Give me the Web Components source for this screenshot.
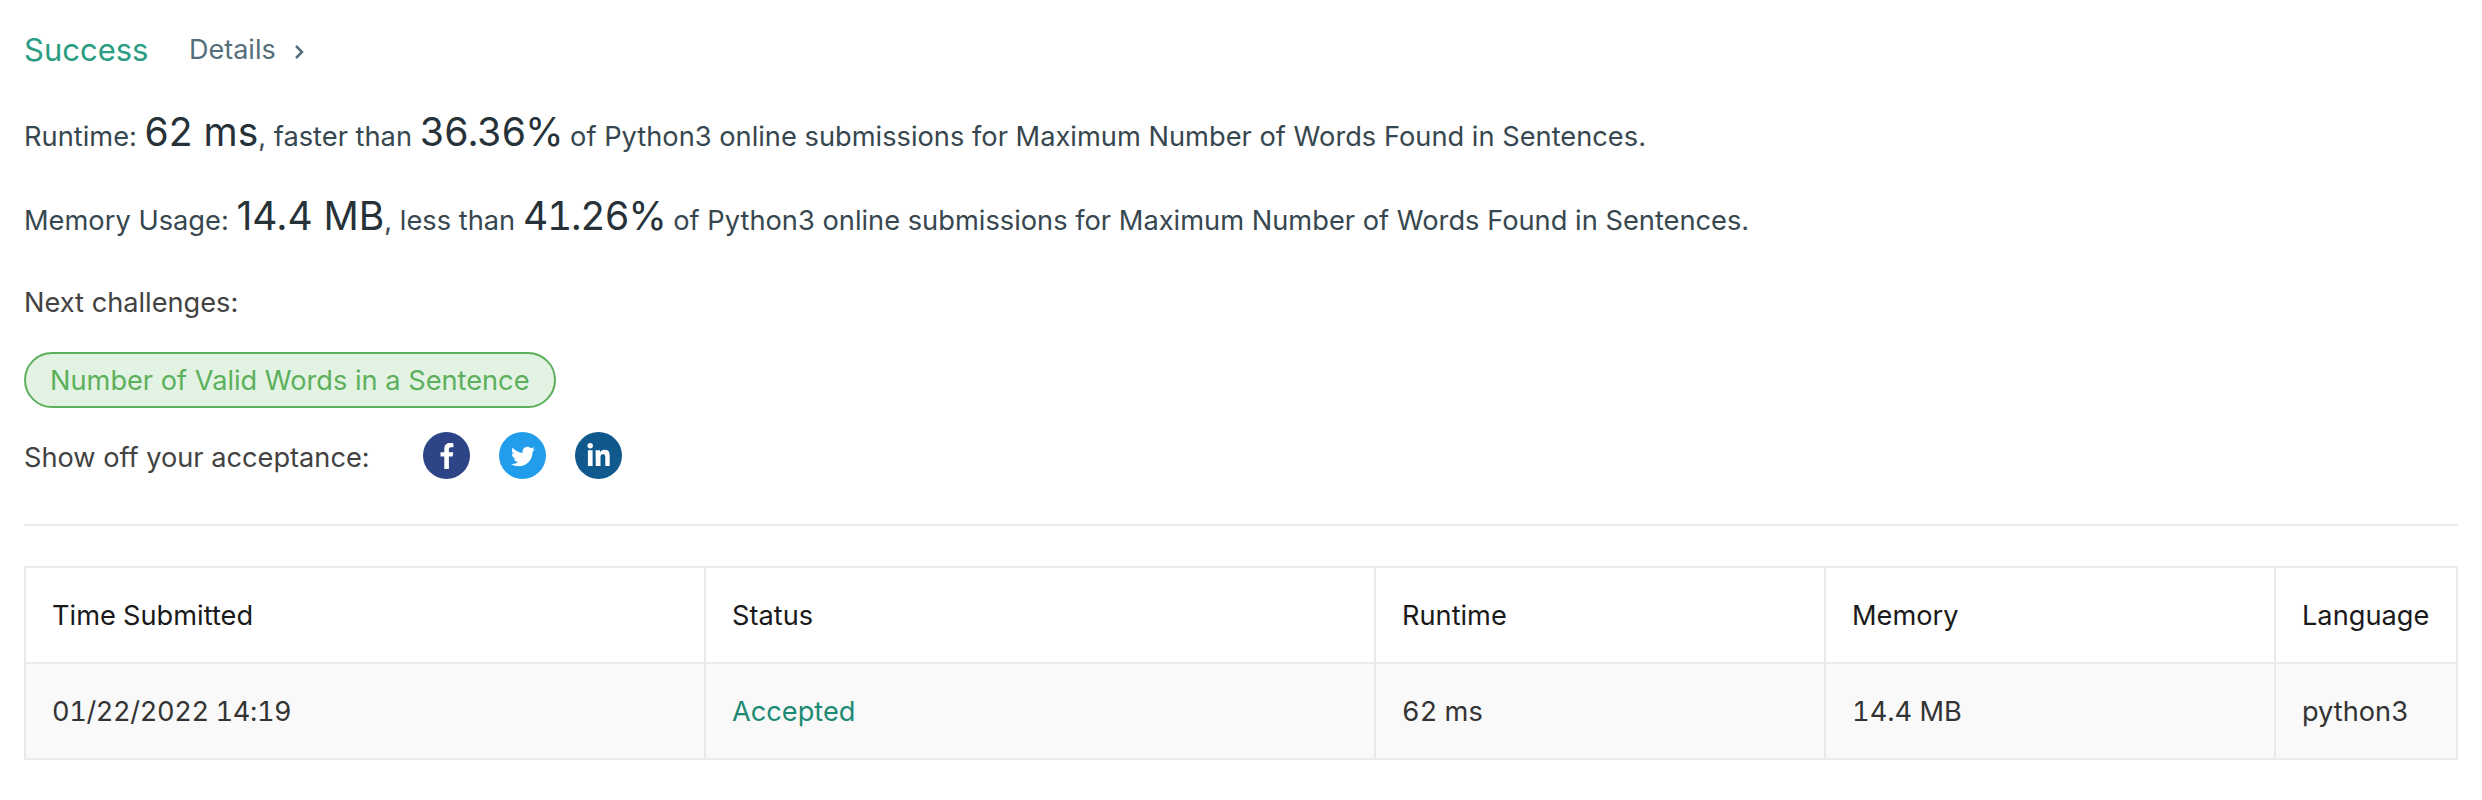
<!DOCTYPE html>
<html>
<head>
<meta charset="utf-8">
<style>
  html, body { margin: 0; background: #fff; }
  body { font-family: Inter, "Noto Sans", sans-serif; }
</style>
</head>
<body>
<submission-panel>
  <result-header status="Success"></result-header>
  <stat-line metric="Runtime" value="62 ms" compare="faster than" percent="36.36%" problem="Maximum Number of Words Found in Sentences"></stat-line>
  <stat-line metric="Memory Usage" value="14.4 MB" compare="less than" percent="41.26%" problem="Maximum Number of Words Found in Sentences"></stat-line>
  <next-challenges>
    <challenge-pill>Number of Valid Words in a Sentence</challenge-pill>
  </next-challenges>
  <share-row></share-row>
  <submission-table>
    <submission-row head>
      <span>Time Submitted</span><span>Status</span><span>Runtime</span><span>Memory</span><span>Language</span>
    </submission-row>
    <submission-row>
      <span class="date">01/22/2022 14:19</span><span class="ok">Accepted</span><span>62 ms</span><span>14.4 MB</span><span>python3</span>
    </submission-row>
  </submission-table>
</submission-panel>

<script>
class SubmissionPanel extends HTMLElement {
  constructor() {
    super();
    this.attachShadow({ mode: "open" });
    this.shadowRoot.innerHTML = `
      <style>
        :host { display: block; padding: 0 24px; box-sizing: border-box; width: 2482px; height: 800px; }
      </style>
      <slot></slot>
    `;
  }
}

class ResultHeader extends HTMLElement {
  constructor() {
    super();
    this.attachShadow({ mode: "open" });
  }

  connectedCallback() {
    this.shadowRoot.innerHTML = `
      <style>
        :host { display: flex; align-items: center; height: 94px; box-sizing: border-box; padding-top: 4px; }
        .status { font-size: 31px; color: #2a9d83; font-weight: 400; width: 165px; }
        .details { font-size: 27px; color: #546e7a; }
        svg { margin-left: 17px; margin-top: 6px; }
      </style>
      <span class="status">${this.getAttribute("status")}</span>
      <span class="details">Details</span>
      <svg width="12" height="18" viewBox="0 0 12 18" fill="none" stroke="#546e7a" stroke-width="2.5"><path d="M3 3l6 6-6 6"/></svg>
    `;
  }
}

class StatLine extends HTMLElement {
  constructor() {
    super();
    this.attachShadow({ mode: "open" });
  }

  connectedCallback() {
    const get = (k) => this.getAttribute(k);
    this.shadowRoot.innerHTML = `
      <style>
        :host { display: flex; align-items: center; height: 84px; font-size: 27.25px; color: #37474f; white-space: pre; }
        b { font-weight: 400; font-size: 39px; color: #263238; }
        .percent { font-variant-numeric: tabular-nums; letter-spacing: -1.2px; }
        p { margin: 0 0 9px; }
      </style>
      <p>${get("metric")}: <b>${get("value")}</b>, ${get("compare")} <b class="percent">${get("percent")}</b> of Python3 online submissions for ${get("problem")}.</p>
    `;
  }
}

class NextChallenges extends HTMLElement {
  constructor() {
    super();
    this.attachShadow({ mode: "open" });
    this.shadowRoot.innerHTML = `
      <style>
        :host { display: block; color: #424242; font-size: 27.2px; }
        .label { height: 80px; display: flex; align-items: center; }
        .list { display: flex; margin-top: 10px; }
      </style>
      <div class="label">Next challenges:</div>
      <div class="list"><slot></slot></div>
    `;
  }
}

class ChallengePill extends HTMLElement {
  constructor() {
    super();
    this.attachShadow({ mode: "open" });
    this.shadowRoot.innerHTML = `
      <style>
        :host {
          display: inline-flex; align-items: center; box-sizing: border-box;
          height: 56px; padding: 0 24px;
          border: 2px solid #5cb05c; border-radius: 28px;
          background: #e3f3e3; color: #5cb05c; font-size: 27.2px;
        }
      </style>
      <slot></slot>
    `;
  }
}

class ShareRow extends HTMLElement {
  constructor() {
    super();
    this.attachShadow({ mode: "open" });
    this.shadowRoot.innerHTML = `
      <style>
        :host { display: flex; align-items: center; height: 118px; color: #424242; font-size: 27.2px; border-bottom: 2px solid #eaeaea; padding-bottom: 17px; box-sizing: border-box; margin-bottom: 40px; }
        .label { width: 399px; }
        .icons { display: flex; gap: 29px; margin-bottom: 4px; }
        .icons svg { display: block; width: 47px; height: 47px; }
      </style>
      <span class="label">Show off your acceptance:</span>
      <div class="icons">
        <svg viewBox="0 0 47 47"><circle cx="23.5" cy="23.5" r="23.5" fill="#2d4486"/>
          <path fill="#fff" d="M25.9 37V24.6h3.8l.6-4.4h-4.4v-2.8c0-1.3.4-2.1 2.2-2.1h2.3v-4c-.4 0-1.8-.2-3.4-.2-3.4 0-5.7 2-5.7 5.8v3.3h-3.8v4.4h3.8V37z"/></svg>
        <svg viewBox="0 0 47 47"><circle cx="23.5" cy="23.5" r="23.5" fill="#229dec"/>
          <g transform="translate(12 12.5)"><path fill="#fff" d="M23.953 4.57a10 10 0 01-2.825.775 4.958 4.958 0 002.163-2.723c-.951.555-2.005.959-3.127 1.184a4.92 4.92 0 00-8.384 4.482C7.69 8.095 4.067 6.13 1.64 3.162a4.822 4.822 0 00-.666 2.475c0 1.71.87 3.213 2.188 4.096a4.904 4.904 0 01-2.228-.616v.06a4.923 4.923 0 003.946 4.827 4.996 4.996 0 01-2.212.085 4.936 4.936 0 004.604 3.417 9.867 9.867 0 01-6.102 2.105c-.39 0-.779-.023-1.17-.067a13.995 13.995 0 007.557 2.209c9.053 0 13.998-7.496 13.998-13.985 0-.21 0-.42-.015-.63A9.935 9.935 0 0024 4.59z"/></g></svg>
        <svg viewBox="0 0 47 47"><circle cx="23.5" cy="23.5" r="23.5" fill="#10598c"/>
          <circle cx="15.2" cy="13.8" r="2.7" fill="#fff"/>
          <rect x="12.9" y="18.2" width="4.7" height="15.8" fill="#fff"/>
          <path fill="#fff" d="M20.5 18.2h4.5v2.1c.7-1.3 2.3-2.5 4.7-2.5 4.9 0 5 3.2 5 7.4V34h-4.4v-7.9c0-1.7 0-3.9-2.4-3.9s-2.4 1.9-2.4 3.8V34h-4.7z"/></svg>
      </div>
    `;
  }
}

class SubmissionTable extends HTMLElement {
  constructor() {
    super();
    this.attachShadow({ mode: "open" });
    this.shadowRoot.innerHTML = `
      <style>
        :host { display: block; border: 2px solid #eaeaea; box-sizing: border-box; }
      </style>
      <slot></slot>
    `;
  }
}

class SubmissionRow extends HTMLElement {
  constructor() {
    super();
    this.attachShadow({ mode: "open" });
    this.shadowRoot.innerHTML = `
      <style>
        :host {
          display: grid;
          grid-template-columns: 678px 670px 450px 450px 1fr;
          height: 94px; box-sizing: border-box;
          font-size: 27.2px; color: #333;
          font-variant-numeric: tabular-nums;
          background: #f9f9f9;
        }
        :host([head]) { height: 96px; background: #fff; color: #1a1a1a; border-bottom: 2px solid #eaeaea; }
        ::slotted(span) {
          display: flex; align-items: center;
          padding-left: 26px;
          border-left: 2px solid #eaeaea;
          box-sizing: border-box;
        }
        ::slotted(span:first-child) { border-left: 0; }
        ::slotted(.ok) { color: #1d8a74; }
        ::slotted(.date) { letter-spacing: -0.4px; }
      </style>
      <slot></slot>
    `;
  }
}

customElements.define("submission-panel", SubmissionPanel);
customElements.define("result-header", ResultHeader);
customElements.define("stat-line", StatLine);
customElements.define("next-challenges", NextChallenges);
customElements.define("challenge-pill", ChallengePill);
customElements.define("share-row", ShareRow);
customElements.define("submission-table", SubmissionTable);
customElements.define("submission-row", SubmissionRow);
</script>
</body>
</html>
